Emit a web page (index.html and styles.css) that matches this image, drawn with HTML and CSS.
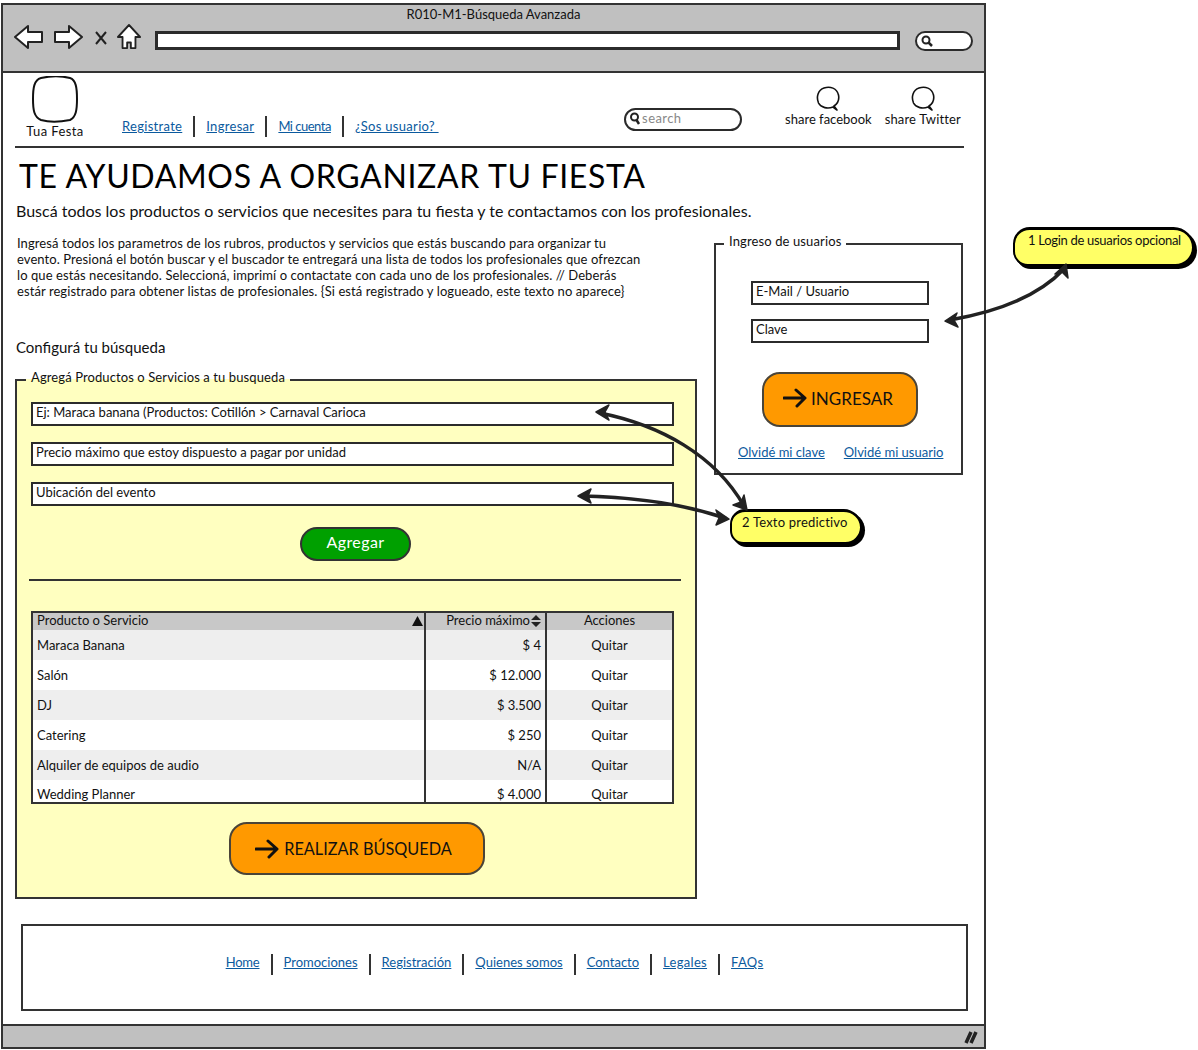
FILE: index.html
```html
<!DOCTYPE html>
<html lang="es">
<head>
<meta charset="UTF-8">
<meta name="viewport" content="width=device-width, initial-scale=1.0">
<title>R010-M1-Búsqueda Avanzada</title>
<link rel="stylesheet" href="styles.css">
</head>
<body>

<div class="window">
    <div class="chrome">
        <div class="chrome-title">R010-M1-Búsqueda Avanzada</div>
        <div class="chrome-row">
            <svg class="ico-arrow" width="30" height="26" viewBox="0 0 30 26"><path d="M1 13 L14 2 L14 8 L28 8 L28 18 L14 18 L14 24 Z" fill="#fff" stroke="#222" stroke-width="2" stroke-linejoin="round"/></svg>
            <svg class="ico-arrow" width="30" height="26" viewBox="0 0 30 26"><path d="M29 13 L16 2 L16 8 L2 8 L2 18 L16 18 L16 24 Z" fill="#fff" stroke="#222" stroke-width="2" stroke-linejoin="round"/></svg>
            <svg class="ico-stop" width="14" height="16" viewBox="0 0 14 16"><path d="M2 2 L12 14 M12 2 L2 14" fill="none" stroke="#222" stroke-width="2"/></svg>
            <svg class="ico-home" width="24" height="26" viewBox="0 0 26 28"><path d="M13 1 L25 14 L20 14 L20 26 L15 26 L15 20 L11 20 L11 26 L6 26 L6 14 L1 14 Z" fill="#fff" stroke="#222" stroke-width="2" stroke-linejoin="round"/></svg>
            <div class="url-bar"></div>
            <div class="chrome-search">
                <svg width="14" height="14" viewBox="0 0 14 14"><circle cx="6" cy="6" r="3.5" fill="none" stroke="#222" stroke-width="2"/><path d="M8.500 8.500 L12 12" stroke="#222" stroke-width="2.500"/></svg>
            </div>
        </div>
    </div>

    <div class="page">
        <div class="top">
            <div class="logo">
                <svg width="46" height="47" viewBox="0 0 46 47"><path d="M9 2 C18 0 30 0 38 2 C44 4 45 12 45 23 C45 34 44 41 38 44 C28 46 16 46 9 44 C2 41 1 34 1 23 C1 12 2 4 9 2 Z" fill="#fff" stroke="#111" stroke-width="2"/></svg>
                <span>Tua Festa</span>
            </div>
            <div class="top-links">
                <a href="#">Registrate</a><i></i>
                <a href="#">Ingresar</a><i></i>
                <a href="#" class="tight">Mi cuenta</a><i></i>
                <a href="#">¿Sos usuario?&nbsp;</a>
            </div>
            <div class="search-box">
                <svg width="12" height="14" viewBox="0 0 12 14"><circle cx="5.500" cy="6" r="3.500" fill="none" stroke="#222" stroke-width="2"/><path d="M7.500 9 L10 13" stroke="#222" stroke-width="2.500"/></svg>
                <span>search</span>
            </div>
            <div class="share share-fb">
                <svg width="24" height="25" viewBox="0 0 24 25"><path d="M17 21 C12 23 5 22 2.500 17 C0 11 2 4 8 2 C14 0 21 2 22.500 9 C23.500 14 21 18 18 20 L21 24 Z" fill="#fff" stroke="#111" stroke-width="1.600" stroke-linejoin="round"/></svg>
                <span>share facebook</span>
            </div>
            <div class="share share-tw">
                <svg width="24" height="25" viewBox="0 0 24 25"><path d="M17 21 C12 23 5 22 2.500 17 C0 11 2 4 8 2 C14 0 21 2 22.500 9 C23.500 14 21 18 18 20 L21 24 Z" fill="#fff" stroke="#111" stroke-width="1.600" stroke-linejoin="round"/></svg>
                <span>share Twitter</span>
            </div>
        </div>

        <h1>TE AYUDAMOS A ORGANIZAR TU FIESTA</h1>
        <p class="subtitle">Buscá todos los productos o servicios que necesites para tu fiesta y te contactamos con los profesionales.</p>

        <div class="columns">
            <div class="col-left">
                <p class="intro">Ingresá todos los parametros de los rubros, productos y servicios que estás buscando para organizar tu<br>evento. Presioná el botón buscar y el buscador te entregará una lista de todos los profesionales que ofrezcan<br>lo que estás necesitando. Seleccioná, imprimí o contactate con cada uno de los profesionales. // Deberás<br>estár registrado para obtener listas de profesionales. {Si está registrado y logueado, este texto no aparece}</p>
                <h2>Configurá tu búsqueda</h2>

                <fieldset class="group group-yellow">
                    <legend>Agregá Productos o Servicios a tu busqueda</legend>
                    <div class="field">Ej: Maraca banana (Productos: Cotillón &gt; Carnaval Carioca</div>
                    <div class="field">Precio máximo que estoy dispuesto a pagar por unidad</div>
                    <div class="field">Ubicación del evento</div>
                    <button class="btn-green" type="button">Agregar</button>
                    <hr class="rule">
                    <table class="results">
                        <colgroup><col class="c1"><col class="c2"><col class="c3"></colgroup>
                        <thead>
                            <tr>
                                <th><span class="th-in">Producto o Servicio <svg width="11" height="10" viewBox="0 0 11 10"><path d="M5.500 0 L11 10 L0 10 Z" fill="#111"/></svg></span></th>
                                <th><span class="th-in th-end">Precio máximo<svg width="10" height="12" viewBox="0 0 10 12"><path d="M5 0 L10 5 L0 5 Z M5 12 L10 7 L0 7 Z" fill="#222"/></svg></span></th>
                                <th class="mid">Acciones</th>
                            </tr>
                        </thead>
                        <tbody>
                            <tr><td>Maraca Banana</td><td class="num">$ 4</td><td class="mid">Quitar</td></tr>
                            <tr><td>Salón</td><td class="num">$ 12.000</td><td class="mid">Quitar</td></tr>
                            <tr><td>DJ</td><td class="num">$ 3.500</td><td class="mid">Quitar</td></tr>
                            <tr><td>Catering</td><td class="num">$ 250</td><td class="mid">Quitar</td></tr>
                            <tr><td>Alquiler de equipos de audio</td><td class="num">N/A</td><td class="mid">Quitar</td></tr>
                            <tr class="cut"><td>Wedding Planner</td><td class="num">$ 4.000</td><td class="mid">Quitar</td></tr>
                        </tbody>
                    </table>
                    <button class="btn-orange btn-search" type="button">
                        <svg width="24" height="20" viewBox="0 0 24 20"><path d="M1 10 L21 10 M13 2 L22 10 L14 18" fill="none" stroke="#111" stroke-width="3" stroke-linecap="round" stroke-linejoin="round"/></svg>
                        REALIZAR BÚSQUEDA
                    </button>
                </fieldset>
            </div>

            <div class="col-right">
                <fieldset class="group group-login">
                    <legend>Ingreso de usuarios</legend>
                    <div class="field field-login">E-Mail / Usuario</div>
                    <div class="field field-login">Clave</div>
                    <button class="btn-orange btn-login" type="button">
                        <svg width="24" height="20" viewBox="0 0 24 20"><path d="M1 10 L21 10 M13 2 L22 10 L14 18" fill="none" stroke="#111" stroke-width="3" stroke-linecap="round" stroke-linejoin="round"/></svg>
                        INGRESAR
                    </button>
                    <div class="forgot">
                        <a href="#">Olvidé mi clave</a>
                        <a href="#">Olvidé mi usuario</a>
                    </div>
                </fieldset>
            </div>
        </div>

        <div class="footer">
            <a href="#" class="tight">Home</a><i></i>
            <a href="#">Promociones</a><i></i>
            <a href="#">Registración</a><i></i>
            <a href="#">Quienes somos</a><i></i>
            <a href="#">Contacto</a><i></i>
            <a href="#" class="wide">Legales</a><i></i>
            <a href="#" class="wide">FAQs</a>
        </div>
    </div>

    <div class="status">
        <svg width="16" height="16" viewBox="0 0 16 16"><path d="M3 14 L8 3 M8 14 L13 3" fill="none" stroke="#222" stroke-width="3.500"/></svg>
    </div>
</div>

<div class="note note-login">1 Login de usuarios opcional</div>
<div class="note note-text">2 Texto predictivo</div>

<svg class="arrows" width="1198" height="1050" viewBox="0 0 1198 1050">
    <g fill="none" stroke="#222" stroke-width="3.500" stroke-linecap="round">
        <path d="M950 320 C990 313 1035 300 1064 269"/>
        <path d="M600 413 C660 425 715 455 744 506"/>
        <path d="M582 496 C630 497 680 503 725 518"/>
    </g>
    <g fill="#222" stroke="#222" stroke-width="1.500" stroke-linejoin="round">
        <path d="M945 321 L957 313 L954 320 L958 327 Z"/>
        <path d="M1066 264 L1068 278 L1062 272 L1055 274 Z"/>
        <path d="M596 412 L609 405 L605 412 L609 420 Z"/>
        <path d="M747 510 L733 505 L741 502 L744 495 Z"/>
        <path d="M578 496 L591 489 L588 496 L591 503 Z"/>
        <path d="M729 519 L716 525 L719 518 L716 510 Z"/>
    </g>
</svg>

</body>
</html>
```

FILE: styles.css
```css
body {
    margin: 0;
    width: 1198px;
    height: 1050px;
    position: relative;
    overflow: hidden;
    background-color: #fff;
    font-family: "Lato", "Liberation Sans", sans-serif;
    font-size: 13px;
    line-height: 16px;
    color: #111;
}
a {
    color: #0b5a9e;
    text-decoration: underline;
}

/* ventana */
.window {
    box-sizing: border-box;
    width: 985px;
    height: 1046px;
    margin: 3px 0 0 1px;
    border: 2px solid #333;
    display: flex;
    flex-direction: column;
}
.chrome {
    height: 66px;
    flex: none;
    background-color: #c0c0c0;
    border-bottom: 2px solid #333;
}
.chrome-title {
    text-align: center;
    line-height: 18px;
}
.chrome-row {
    display: flex;
    align-items: center;
    margin-top: 1px;
    padding-left: 11px;
    height: 28px;
}
.chrome-row .ico-arrow {
    margin: 0 9px 2px 0;
}
.ico-stop {
    margin: 0 9px 0 2px;
}
.ico-home {
    margin-bottom: 3px;
}
.url-bar {
    box-sizing: border-box;
    width: 745px;
    height: 19px;
    margin: 4px 0 0 14px;
    background-color: #fff;
    border: 3px solid #2b2b2b;
}
.chrome-search {
    box-sizing: border-box;
    width: 58px;
    height: 20px;
    margin: 5px 0 0 15px;
    padding-left: 3px;
    display: flex;
    align-items: center;
    background-color: #fff;
    border: 2px solid #2b2b2b;
    border-radius: 10px;
}
.status {
    flex: none;
    height: 21px;
    background-color: #c0c0c0;
    border-top: 2px solid #333;
    display: flex;
    justify-content: flex-end;
    align-items: center;
    padding-right: 5px;
}

/* contenido */
.page {
    flex: 1;
    min-height: 0;
    padding: 0 20px 0 12px;
}
.top {
    box-sizing: border-box;
    height: 75px;
    display: flex;
    align-items: flex-start;
    padding-right: 3px;
    border-bottom: 2px solid #333;
}
.logo {
    width: 80px;
    padding-top: 3px;
    text-align: center;
    flex: none;
}
.logo svg {
    display: block;
    margin: 0 auto;
}
.logo span {
    display: block;
    line-height: 16px;
    letter-spacing: 0.4px;
}
.top-links {
    display: flex;
    align-items: center;
    height: 22px;
    margin: 42px 0 0 27px;
    letter-spacing: 0.3px;
    flex: none;
}
.top-links i, .footer i {
    display: block;
    width: 2px;
    height: 21px;
    margin: 0 11px;
    background-color: #333;
}
.top-links .tight {
    letter-spacing: -0.5px;
}
.search-box {
    box-sizing: border-box;
    width: 118px;
    height: 23px;
    margin: 35px 0 0 auto;
    display: flex;
    align-items: center;
    gap: 1px;
    padding: 0 0 4px 3px;
    background-color: #fff;
    border: 2px solid #2b2b2b;
    border-radius: 12px;
    color: #888;
    letter-spacing: 0.4px;
    flex: none;
}
.share {
    text-align: center;
    margin-top: 13px;
    flex: none;
}
.share-fb {
    margin-left: 43px;
}
.share-tw {
    margin-left: 13px;
    letter-spacing: 0.15px;
}
.share svg {
    display: block;
    margin: 0 auto;
}
h1 {
    margin: 12px 0 0 4px;
    font-size: 32px;
    line-height: 32px;
    font-weight: 400;
    letter-spacing: 0.65px;
    color: #000;
}
.subtitle {
    margin: 9px 0 0 1px;
    font-size: 16px;
    line-height: 20px;
}
.columns {
    display: grid;
    grid-template-columns: 682px 249px;
    column-gap: 17px;
}
.intro {
    margin: 14px 0 0 2px;
    letter-spacing: 0.08px;
}
h2 {
    margin: 38px 0 0 1px;
    font-size: 15px;
    line-height: 20px;
    font-weight: 400;
}

/* cajas */
.group {
    margin: 0;
    min-width: 0;
    border: 2px solid #333;
}
.group legend {
    padding: 0 5px 6px;
    line-height: 16px;
}
.group-yellow {
    margin-top: 12px;
    padding: 11px 21px 22px 14px;
    background-color: #ffffc0;
    display: flex;
    flex-direction: column;
}
.group-yellow legend {
    margin-left: -5px;
    letter-spacing: 0.1px;
}
.col-right {
    padding-top: 12px;
}
.group-login {
    height: 238px;
    box-sizing: content-box;
    padding: 0;
}
.group-login legend {
    margin-left: 8px;
    letter-spacing: 0.12px;
}
.field {
    box-sizing: border-box;
    width: 643px;
    height: 24px;
    margin-bottom: 16px;
    padding-left: 3px;
    background-color: #fff;
    border: 2px solid #2b2b2b;
    line-height: 17px;
}
.field-login {
    width: 178px;
    margin: 0 0 14px 35px;
}
.group-login .field-login:first-of-type {
    margin-top: 26px;
}
.btn-green {
    width: 111px;
    height: 34px;
    margin: 5px 0 0 269px;
    padding: 0 0 5px;
    background-color: #00a000;
    border: 2px solid #333;
    border-radius: 17px;
    color: #fff;
    font: 16px "Lato", sans-serif;
    letter-spacing: 0.4px;
}
.rule {
    width: 652px;
    height: 2px;
    margin: 18px 0 30px -2px;
    padding: 0;
    border: none;
    background-color: #333;
}
.results {
    width: 643px;
    table-layout: fixed;
    border-collapse: separate;
    border-spacing: 0;
    border: 2px solid #333;
    background-color: #fff;
}
.c1 { width: 393px; }
.c2 { width: 121px; }
.results th {
    height: 17px;
    padding: 0 4px;
    background-color: #c8c8c8;
    font-weight: 400;
    line-height: 15px;
    text-align: left;
    vertical-align: top;
}
.results th:first-child {
    padding-right: 1px;
}
.results td {
    height: 30px;
    padding: 0 4px;
}
.results th:not(:last-child), .results td:not(:last-child) {
    border-right: 2px solid #333;
}
.results tbody tr:nth-child(odd) td {
    background-color: #eee;
}
.results .cut td {
    height: 22px;
    padding-top: 6px;
    padding-bottom: 0;
    box-sizing: border-box;
}
.results .num {
    text-align: right;
}
.results .mid {
    text-align: center;
}
.th-in {
    display: flex;
    justify-content: space-between;
    align-items: center;
}
.th-end {
    justify-content: flex-end;
    gap: 1px;
}
.btn-orange {
    display: flex;
    align-items: center;
    justify-content: center;
    padding: 0;
    background-color: #ff9900;
    border: 2px solid #4a4438;
    border-radius: 18px;
    color: #111;
    font: 17px "Lato", sans-serif;
}
.btn-search {
    width: 256px;
    height: 53px;
    margin: 18px 0 0 198px;
    padding-right: 7px;
    gap: 5px;
    font-size: 16.3px;
}
.btn-login {
    width: 156px;
    height: 55px;
    margin: 29px 0 0 46px;
    padding: 0 4px 3px 0;
    gap: 4px;
}
.forgot {
    display: flex;
    gap: 19px;
    margin: 17px 0 0 22px;
}
.footer {
    box-sizing: border-box;
    width: 947px;
    height: 87px;
    margin: 25px 0 0 6px;
    padding-top: 28px;
    display: flex;
    justify-content: center;
    align-items: flex-start;
    border: 2px solid #333;
    background-color: #fff;
}
.footer .tight {
    letter-spacing: -0.2px;
}
.footer .wide {
    letter-spacing: 0.3px;
}

/* notas y flechas */
.note {
    position: absolute;
    box-sizing: border-box;
    background-color: #ffff66;
    border: 2px solid #000;
    border-top-width: 3px;
    border-radius: 18px 22px 20px 16px;
    box-shadow: 3px 3px 0 #000;
    line-height: 16px;
}
.note-login {
    left: 1013px;
    top: 227px;
    width: 181px;
    height: 39px;
    padding: 2px 0 0 13px;
    letter-spacing: -0.3px;
    white-space: nowrap;
}
.note-text {
    left: 730px;
    top: 509px;
    width: 132px;
    height: 35px;
    padding: 2px 0 0 10px;
    letter-spacing: 0.2px;
}
.arrows {
    position: absolute;
    left: 0;
    top: 0;
    pointer-events: none;
}
```
